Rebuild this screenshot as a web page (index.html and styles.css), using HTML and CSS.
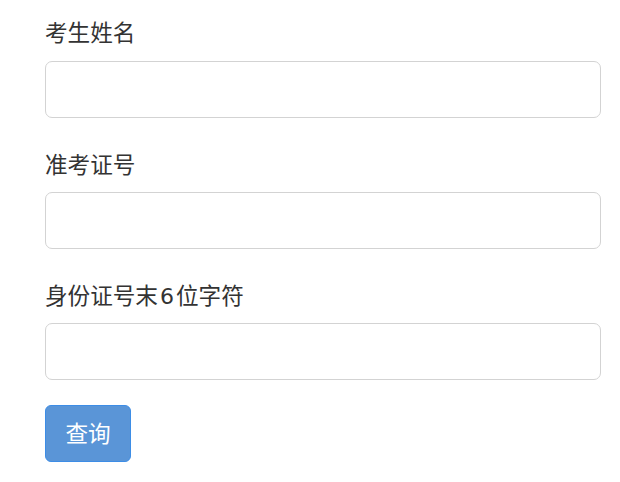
FILE: index.html
```html
<!DOCTYPE html>
<html lang="zh">
<head>
<meta charset="utf-8">
<link rel="stylesheet" href="styles.css">
</head>
<body>
<form class="form">
  <div class="group">
    <label class="label">考生姓名</label>
    <input class="input" type="text">
  </div>
  <div class="group">
    <label class="label">准考证号</label>
    <input class="input" type="text">
  </div>
  <div class="group group-last">
    <label class="label">身份证号末<span class="digit">6</span>位字符</label>
    <input class="input" type="text">
  </div>
  <button class="btn" type="button">查询</button>
</form>
</body>
</html>
```

FILE: styles.css
```css
html, body {
  margin: 0;
  padding: 0;
  background: #fff;
}
body {
  font-family: "Noto Sans CJK SC", "Noto Sans", sans-serif;
  color: #333;
}
.form {
  padding: 15px 19px 0 45px;
}
.group {
  display: flex;
  flex-direction: column;
  margin-bottom: 29px;
}
.group-last {
  margin-bottom: 25px;
}
.label {
  font-size: 22.6px;
  line-height: 33px;
  height: 33px;
  margin-bottom: 13px;
  color: #333;
}
.group + .group .label {
  margin-bottom: 12px;
}
.digit {
  font-family: "DejaVu Sans", sans-serif;
  font-size: 22px;
  padding: 0 2px;
}
.input {
  box-sizing: border-box;
  height: 57px;
  width: 100%;
  border: 1.5px solid #d3d3d3;
  border-radius: 7px;
  background: #fff;
  margin: 0;
  padding: 0 20px;
  font-size: 22px;
  outline: none;
}
.btn {
  box-sizing: border-box;
  height: 57px;
  width: 86px;
  padding: 0;
  border: 1.5px solid #3d8de6;
  border-radius: 6px;
  background: #5a95d7;
  color: #fff;
  font-family: "Noto Sans CJK SC", "Noto Sans", sans-serif;
  font-size: 22.6px;
  line-height: 1;
  display: flex;
  align-items: center;
  justify-content: center;
}
```
